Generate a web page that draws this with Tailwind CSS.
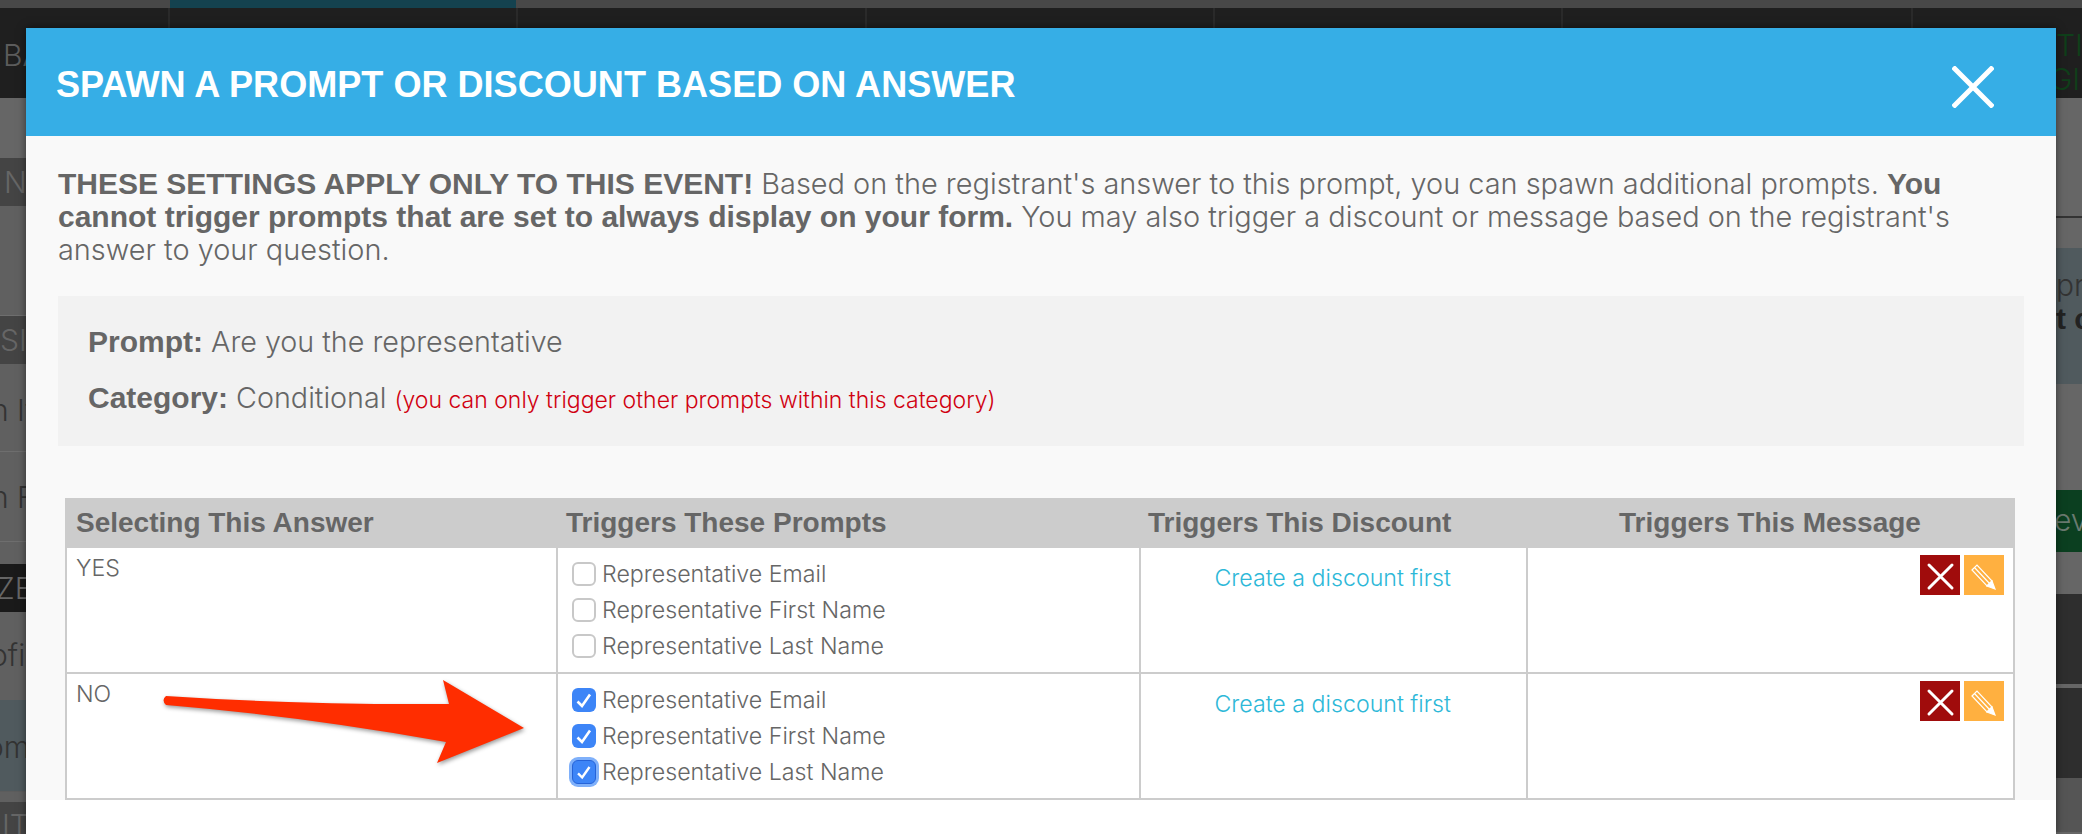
<!DOCTYPE html>
<html lang="en">
<head>
  <meta charset="UTF-8" />
  <title>Spawn a prompt</title>
  <script src="https://cdn.jsdelivr.net/npm/@tailwindcss/browser@4"></script>
</head>
<body class="m-0 h-[834px] w-[2082px] overflow-hidden bg-[#666] font-['Liberation_Sans',Arial,sans-serif]">
  <div class="relative h-[834px] w-[2082px] overflow-hidden">

    <!-- page behind the overlay -->
    <div class="h-[8px] flex bg-[#484848]">
      <div class="ml-[170px] w-[346px] bg-[#14424f]"></div>
    </div>
    <div class="h-[90px] flex bg-[#1f1f1f] text-[30px] leading-[34px] font-['Inter',sans-serif] font-light">
      <div class="w-[170px] border-r-2 border-[#2a2a2a] pt-[30px] pl-[3px] text-[#5c5c5c]">BA</div>
      <div class="w-[348px] border-r-2 border-[#2a2a2a]"></div>
      <div class="w-[349px] border-r-2 border-[#2a2a2a]"></div>
      <div class="w-[348px] border-r-2 border-[#2a2a2a]"></div>
      <div class="w-[348px] border-r-2 border-[#2a2a2a]"></div>
      <div class="w-[350px] border-r-2 border-[#2a2a2a]"></div>
      <div class="flex-1 overflow-hidden whitespace-nowrap pt-[20px] pl-[143px] text-[#0f3f1a]"><div>TIVA</div><div class="-ml-[6px]">GIS</div></div>
    </div>

    <div class="flex justify-between">
      <div class="w-[30px] overflow-hidden whitespace-nowrap text-[30px] leading-[34px] font-['Inter',sans-serif] font-light text-[#333]">
        <div class="h-[60px]"></div>
        <div class="h-[48px] bg-[#444] pt-[7px] pl-[4px] text-[#666]">N</div>
        <div class="h-[110px] border-b border-[#6e6e6e] bg-[#606060]"></div>
        <div class="h-[48px] bg-[#444] pt-[7px] text-[#666]">SI</div>
        <div class="h-[88px] border-b border-[#6e6e6e] bg-[#606060] pt-[29px] -indent-[9px]">n It</div>
        <div class="h-[90px] border-b border-[#6e6e6e] bg-[#606060] pt-[28px] -indent-[9px]">n F</div>
        <div class="h-[22px] bg-[#606060]"></div>
        <div class="h-[48px] bg-[#1a1a1a] pt-[7px] -indent-[4px] text-[#666]">ZE</div>
        <div class="h-[88px] bg-[#606060] pt-[26px] -indent-[10px]">ofile</div>
        <div class="h-[92px] border-b border-[#5c5c5c] bg-[#505a5e] pt-[30px] -indent-[14px]">om</div>
        <div class="h-[10px] bg-[#606060]"></div>
        <div class="h-[32px] bg-[#444] pt-[6px] pl-[2px] text-[#666]">IT</div>
      </div>
      <div class="w-[30px] overflow-hidden whitespace-nowrap text-[30px] leading-[34px] font-['Inter',sans-serif] font-light text-[#333]">
        <div class="h-[120px] border-b-2 border-[#333] bg-[#666]"></div>
        <div class="h-[30px] bg-[#666]"></div>
        <div class="h-[136px] bg-[#505a5e] pl-[4px] pt-[20px]">
          <div>pro</div>
          <div class="font-['Liberation_Sans',sans-serif] font-bold text-[#222]">t c</div>
        </div>
        <div class="h-[106px] bg-[#666]"></div>
        <div class="h-[62px] bg-[#0b3f20] pt-[13px] pl-[2px] text-[#6a7a70]">ev</div>
        <div class="h-[42px] bg-[#666]"></div>
        <div class="h-[90px] bg-[#2e2e2e]"></div>
        <div class="h-[4px] bg-[#666]"></div>
        <div class="h-[90px] bg-[#2e2e2e]"></div>
        <div class="h-[54px] bg-[#555]"></div>
      </div>
    </div>

    <!-- modal -->
    <div class="absolute left-[26px] top-[28px] bottom-0 w-[2030px] bg-white shadow-[0_0_8px_rgba(0,0,0,0.5)]">
      <div class="h-[108px] bg-[#36aee6] pl-[30px] flex items-center justify-between">
        <h1 class="mt-[7px] text-[36.1px] font-bold text-white">SPAWN A PROMPT OR DISCOUNT BASED ON ANSWER</h1>
        <svg class="mr-[62px] mt-[9px]" width="42" height="42" viewBox="0 0 42 42"><path d="M1 1 L41 41 M41 1 L1 41" stroke="#fff" stroke-width="5" /></svg>
      </div>
      <div class="h-[664px] bg-[#f9f9f9] px-[32px] pt-[31px] text-[#666] font-['Inter',sans-serif] font-light">
        <p class="text-[28.9px] leading-[33px] whitespace-nowrap">
          <b class="font-bold font-['Liberation_Sans',sans-serif] text-[30px]">THESE SETTINGS APPLY ONLY TO THIS EVENT!</b> Based on the registrant's answer to this prompt, you can spawn additional prompts. <b class="font-bold font-['Liberation_Sans',sans-serif] text-[30px]">You</b><br>
          <b class="font-bold font-['Liberation_Sans',sans-serif] text-[30px]">cannot trigger prompts that are set to always display on your form.</b> You may also trigger a discount or message based on the registrant's<br>
          answer to your question.
        </p>
        <div class="mt-[30px] h-[150px] w-[1966px] bg-[#f2f2f2] px-[30px] pt-[28px] text-[28.7px]">
          <div class="leading-[36px]"><b class="font-bold font-['Liberation_Sans',sans-serif] text-[30px]">Prompt:</b> Are you the representative</div>
          <div class="mt-[20px] leading-[36px]"><b class="font-bold font-['Liberation_Sans',sans-serif] text-[30px]">Category:</b> Conditional <span class="text-[23px] text-[#d00010]">(you can only trigger other prompts within this category)</span></div>
        </div>

        <table class="mt-[52px] ml-[7px] w-[1948px] table-fixed border-collapse border-2 border-[#ccc] bg-white text-[23.2px] leading-[36px]">
          <colgroup>
            <col class="w-[491px]" />
            <col class="w-[583px]" />
            <col class="w-[387px]" />
            <col class="w-[487px]" />
          </colgroup>
          <thead>
            <tr class="h-[48px] bg-[#ccc] text-[28px] font-bold font-['Liberation_Sans',sans-serif]">
              <th class="pl-[9px] text-left font-bold">Selecting This Answer</th>
              <th class="pl-[9px] text-left font-bold">Triggers These Prompts</th>
              <th class="pl-[8px] text-left font-bold">Triggers This Discount</th>
              <th class="text-center font-bold">Triggers This Message</th>
            </tr>
          </thead>
          <tbody>
            <tr class="h-[126px]">
              <td class="border-2 border-[#ccc] pl-[9px] pt-[2px] align-top">YES</td>
              <td class="border-2 border-[#ccc] pl-[14px] pt-[8px] align-top">
                <div class="flex h-[36px] items-center gap-[6px]"><span class="h-[24px] w-[24px] rounded-[6px] border-2 border-[#c8c8c8] bg-white"></span>Representative Email</div>
                <div class="flex h-[36px] items-center gap-[6px]"><span class="h-[24px] w-[24px] rounded-[6px] border-2 border-[#c8c8c8] bg-white"></span>Representative First Name</div>
                <div class="flex h-[36px] items-center gap-[6px]"><span class="h-[24px] w-[24px] rounded-[6px] border-2 border-[#c8c8c8] bg-white"></span>Representative Last Name</div>
              </td>
              <td class="border-2 border-[#ccc] pr-[75px] pt-[12px] align-top text-right text-[#2db8d8]">Create a discount first</td>
              <td class="border-2 border-[#ccc] pr-[9px] pt-[7px] align-top">
                <div class="flex justify-end gap-[4px]">
                  <span class="flex h-[40px] w-[40px] items-center justify-center bg-[#a00c0c]"><svg width="40" height="40" viewBox="0 0 40 40"><path d="M9 10 L32 33 M32 10 L9 33" stroke="#fff" stroke-width="3" stroke-linecap="round" /></svg></span>
                  <span class="flex h-[40px] w-[40px] items-center justify-center bg-[#ffb040]"><svg width="40" height="40" viewBox="0 0 40 40" fill="none" stroke="#fff" stroke-width="1.2"><path d="M8 15 L13 10 L28 26 L23 31 Z M10.5 12.5 L25.5 28.5" /><path d="M23 31 L28 26 L31 34 Z" fill="#fff" /></svg></span>
                </div>
              </td>
            </tr>
            <tr class="h-[126px]">
              <td class="border-2 border-[#ccc] pl-[9px] pt-[2px] align-top">NO</td>
              <td class="border-2 border-[#ccc] pl-[14px] pt-[8px] align-top">
                <div class="flex h-[36px] items-center gap-[6px]"><span class="flex h-[24px] w-[24px] items-center justify-center rounded-[6px] bg-[#3d85f7]"><svg width="24" height="24" viewBox="0 0 24 24" fill="none" stroke="#fff" stroke-width="2.6"><path d="M5.5 13.5 L10 18 L18 6.5" /></svg></span>Representative Email</div>
                <div class="flex h-[36px] items-center gap-[6px]"><span class="flex h-[24px] w-[24px] items-center justify-center rounded-[6px] bg-[#3d85f7]"><svg width="24" height="24" viewBox="0 0 24 24" fill="none" stroke="#fff" stroke-width="2.6"><path d="M5.5 13.5 L10 18 L18 6.5" /></svg></span>Representative First Name</div>
                <div class="flex h-[36px] items-center gap-[6px]"><span class="flex h-[24px] w-[24px] items-center justify-center rounded-[6px] border border-[#2563d8] bg-[#3d85f7] shadow-[0_0_0_3px_#7fb0fa]"><svg width="24" height="24" viewBox="0 0 24 24" fill="none" stroke="#fff" stroke-width="2.6"><path d="M5.5 13.5 L10 18 L18 6.5" /></svg></span>Representative Last Name</div>
              </td>
              <td class="border-2 border-[#ccc] pr-[75px] pt-[12px] align-top text-right text-[#2db8d8]">Create a discount first</td>
              <td class="border-2 border-[#ccc] pr-[9px] pt-[7px] align-top">
                <div class="flex justify-end gap-[4px]">
                  <span class="flex h-[40px] w-[40px] items-center justify-center bg-[#a00c0c]"><svg width="40" height="40" viewBox="0 0 40 40"><path d="M9 10 L32 33 M32 10 L9 33" stroke="#fff" stroke-width="3" stroke-linecap="round" /></svg></span>
                  <span class="flex h-[40px] w-[40px] items-center justify-center bg-[#ffb040]"><svg width="40" height="40" viewBox="0 0 40 40" fill="none" stroke="#fff" stroke-width="1.2"><path d="M8 15 L13 10 L28 26 L23 31 Z M10.5 12.5 L25.5 28.5" /><path d="M23 31 L28 26 L31 34 Z" fill="#fff" /></svg></span>
                </div>
              </td>
            </tr>
          </tbody>
        </table>
      </div>
    </div>

    <!-- annotation arrow -->
    <svg class="absolute left-0 top-0 drop-shadow-[1px_2px_2px_rgba(0,0,0,0.4)]" width="2082" height="834" viewBox="0 0 2082 834" fill="#ff2d00">
      <path d="M166 696 Q300 705 449 704 L443 680 L524 728 L437 763 L446 742 Q300 716 166 705 Q161 700 166 696 Z" />
    </svg>
  </div>
</body>
</html>
